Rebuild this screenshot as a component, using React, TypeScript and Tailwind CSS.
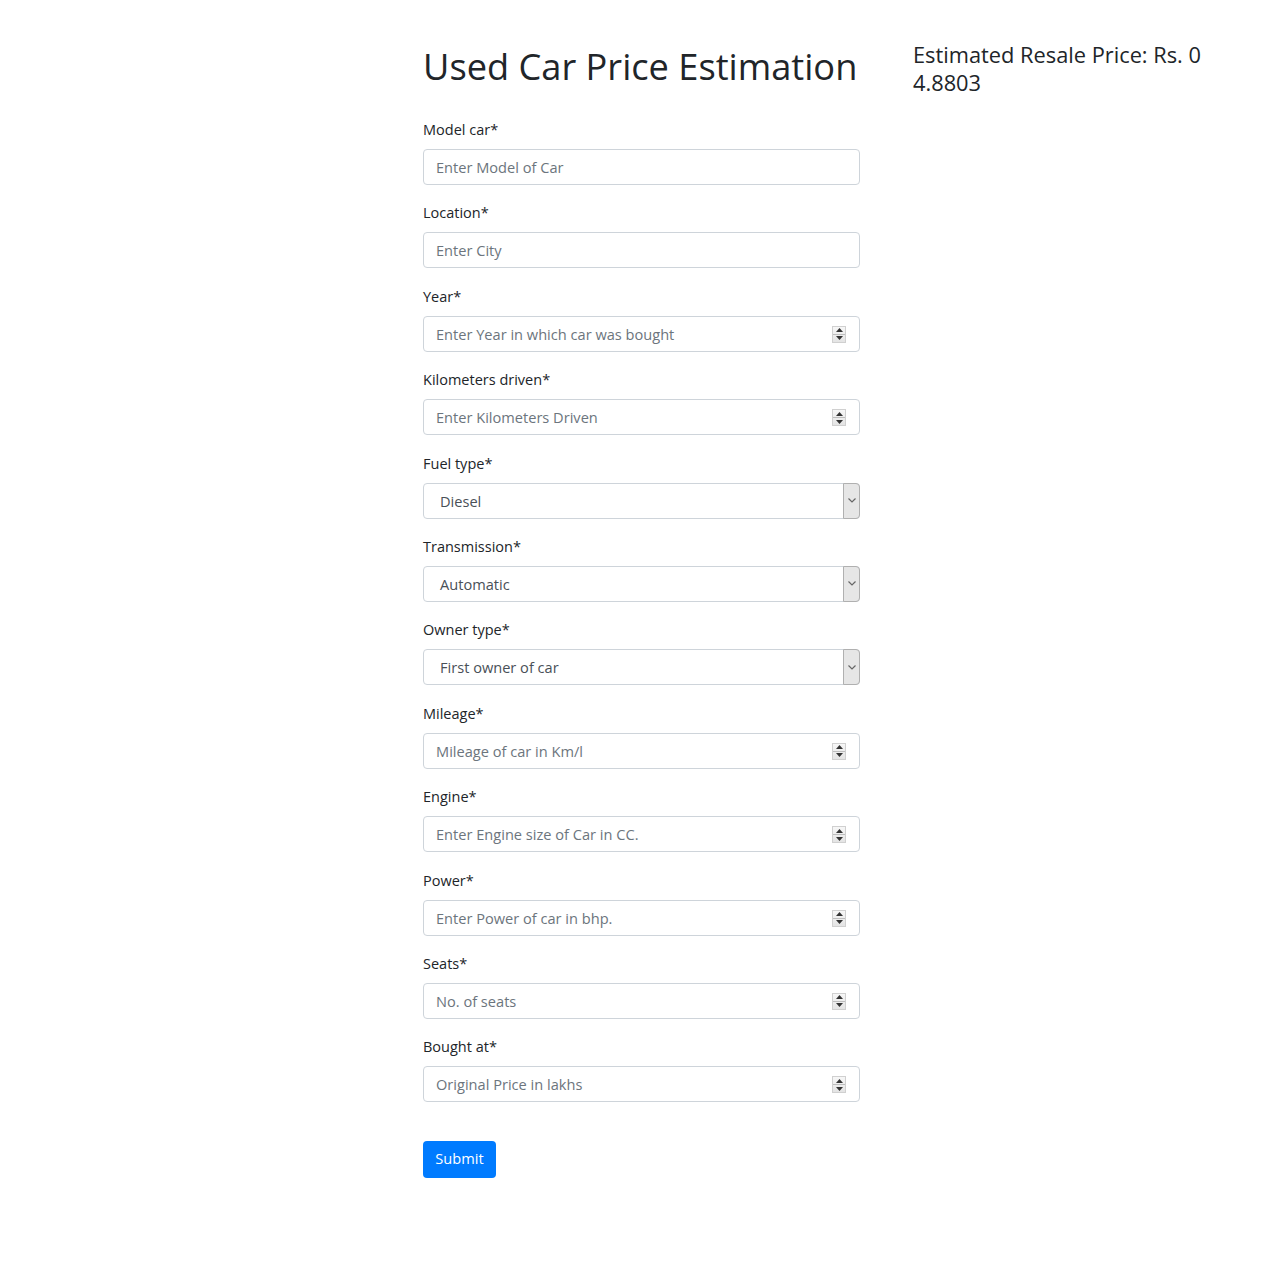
import React from 'react';

type Field = {
  label: string;
  placeholder?: string;
  kind: 'text' | 'number' | 'select';
  value?: string;
};

const FIELDS: Field[] = [
  { label: 'Model car*', placeholder: 'Enter Model of Car', kind: 'text' },
  { label: 'Location*', placeholder: 'Enter City', kind: 'text' },
  { label: 'Year*', placeholder: 'Enter Year in which car was bought', kind: 'number' },
  { label: 'Kilometers driven*', placeholder: 'Enter Kilometers Driven', kind: 'number' },
  { label: 'Fuel type*', value: 'Diesel', kind: 'select' },
  { label: 'Transmission*', value: 'Automatic', kind: 'select' },
  { label: 'Owner type*', value: 'First owner of car', kind: 'select' },
  { label: 'Mileage*', placeholder: 'Mileage of car in Km/l', kind: 'number' },
  { label: 'Engine*', placeholder: 'Enter Engine size of Car in CC.', kind: 'number' },
  { label: 'Power*', placeholder: 'Enter Power of car in bhp.', kind: 'number' },
  { label: 'Seats*', placeholder: 'No. of seats', kind: 'number' },
  { label: 'Bought at*', placeholder: 'Original Price in lakhs', kind: 'number' },
];

// drawn spinner, headless chrome hides the native one until hover
const Spinner = () => (
  <div className="absolute right-[13px] top-[9px] flex h-[17px] w-[14px] flex-col border border-[#d0d0d0] bg-gradient-to-b from-[#f7f7f7] to-[#e4e4e4]">
    <div className="flex flex-1 items-center justify-center border-b border-[#bdbdbd]">
      <svg width="7" height="4" viewBox="0 0 7 4"><polygon points="3.5,0 7,4 0,4" fill="#333" /></svg>
    </div>
    <div className="flex flex-1 items-center justify-center">
      <svg width="7" height="4" viewBox="0 0 7 4"><polygon points="0,0 7,0 3.5,4" fill="#333" /></svg>
    </div>
  </div>
);

const SelectArrow = () => (
  <div className="absolute inset-y-[-1px] right-[-1px] flex w-[17px] items-center justify-center rounded-r-[4px] border border-[#b0b0b0] bg-[#e6e6e6]">
    <svg width="8" height="5" viewBox="0 0 8 5" fill="none" stroke="#666" strokeWidth="1.2">
      <polyline points="0.5,0.5 4,4 7.5,0.5" />
    </svg>
  </div>
);

function FormField({ f }: { f: Field }) {
  return (
    <div className="mb-[17.4px]">
      <label className="mb-[8px] block text-[14.5px] leading-[22px] text-[#212529]">{f.label}</label>
      <div className="relative h-[36px] rounded-[4px] border border-[#ced4da] bg-white">
        {f.kind === 'select' ? (
          <>
            <div className="pl-[16px] text-[14.6px] leading-[34px] text-[#495057]">{f.value}</div>
            <SelectArrow />
          </>
        ) : (
          <>
            <input
              type="text"
              placeholder={f.placeholder}
              className="h-full w-full rounded-[4px] bg-transparent pl-[12px] text-[14.6px] text-[#495057] outline-none placeholder:text-[#6c757d]"
            />
            {f.kind === 'number' && <Spinner />}
          </>
        )}
      </div>
    </div>
  );
}

export default function App() {
  return (
    <div
      className="min-h-[1276px] bg-white text-[#212529]"
      style={{ fontFamily: '"Open Sans", "Noto Sans", sans-serif' }}
    >
      <div className="flex pl-[423px] pt-[41px]">
        <form className="w-[437px]" onSubmit={e => e.preventDefault()}>
          <h1 className="mb-[30px] mt-[2px] whitespace-nowrap text-[36.2px] leading-[46px] font-normal">Used Car Price Estimation</h1>
          {FIELDS.map(f => (
            <FormField key={f.label} f={f} />
          ))}
          <button
            type="submit"
            className="mt-[21px] h-[37px] w-[73px] rounded-[4px] bg-[#007bff] text-[14.6px] text-white"
          >
            Submit
          </button>
        </form>

        <div className="ml-[53px] text-[21.8px] leading-[28px] text-[#212529]">
          <div className="whitespace-nowrap">Estimated Resale Price: Rs. 0</div>
          <div>4.8803</div>
        </div>
      </div>
    </div>
  );
}
